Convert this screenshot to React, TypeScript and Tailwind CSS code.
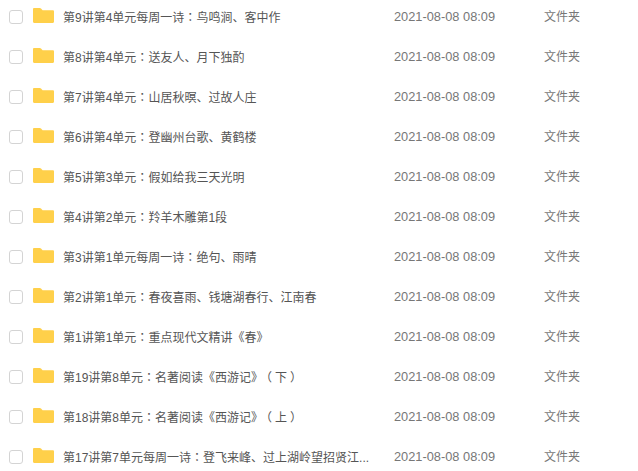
const files = [
  "第9讲第4单元每周一诗：鸟鸣涧、客中作",
  "第8讲第4单元：送友人、月下独酌",
  "第7讲第4单元：山居秋暝、过故人庄",
  "第6讲第4单元：登幽州台歌、黄鹤楼",
  "第5讲第3单元：假如给我三天光明",
  "第4讲第2单元：羚羊木雕第1段",
  "第3讲第1单元每周一诗：绝句、雨晴",
  "第2讲第1单元：春夜喜雨、钱塘湖春行、江南春",
  "第1讲第1单元：重点现代文精讲《春》",
  "第19讲第8单元：名著阅读《西游记》（下）",
  "第18讲第8单元：名著阅读《西游记》（上）",
  "第17讲第7单元每周一诗：登飞来峰、过上湖岭望招贤江...",
];

const FolderIcon = () => (
  <svg width="21" height="15" viewBox="0 0 21 15" className="shrink-0">
    <path
      d="M0 1.200C0 .5.5 0 1.200 0h5.600c.5 0 .9.2 1.200.6L9.600 2.300h10.200c.7 0 1.200.5 1.200 1.200v10.300c0 .7-.5 1.200-1.200 1.200H1.200C.5 15 0 14.500 0 13.800z"
      fill="#ffd04a"
    />
  </svg>
);

// colon and brackets sit centred in their cell in the reference
const FileName = ({ name }: { name: string }) => (
  <>
    {name.split(/([：（）])/).map((part, i) => {
      if (part === "：") {
        return (
          <span key={i} className="font-['Noto_Sans_CJK_TC',sans-serif]">
            {part}
          </span>
        );
      }
      if (part === "（" || part === "）") {
        return (
          <span key={i} className="px-[3px] [font-feature-settings:'halt']">
            {part}
          </span>
        );
      }
      return part;
    })}
  </>
);

const FileRow = ({ name }: { name: string }) => (
  <div className="flex h-10 items-center">
    <div className="ml-[9px] size-[14px] shrink-0 rounded-[3px] border border-[#d4d4d4] bg-white" />
    <div className="ml-[10px] -mt-[3px]">
      <FolderIcon />
    </div>
    <div className="ml-[9px] w-[331px] shrink-0 whitespace-nowrap text-[#555]">
      <FileName name={name} />
    </div>
    <div className="w-[150px] shrink-0 text-[12.800px] text-[#777]">2021-08-08 08:09</div>
    <div className="text-[#777]">文件夹</div>
  </div>
);

export default function App() {
  return (
    <div className="h-[471px] w-[638px] overflow-hidden bg-white font-['Liberation_Sans','Noto_Sans_CJK_SC',sans-serif] text-xs">
      <div className="-mt-[3px]">
        {files.map((name) => (
          <FileRow key={name} name={name} />
        ))}
      </div>
    </div>
  );
}
